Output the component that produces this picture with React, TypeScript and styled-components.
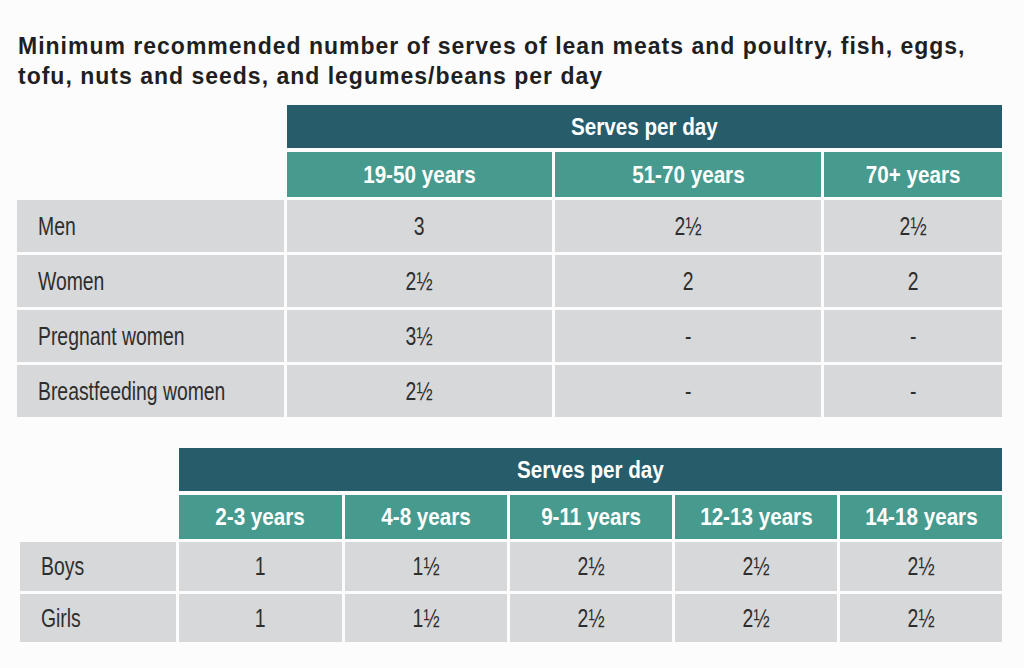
import { Fragment } from 'react';
import { createGlobalStyle, styled } from 'styled-components';

const GlobalStyle = createGlobalStyle`
  html, body {
    margin: 0;
    padding: 0;
    background: #fcfcfc;
  }
`;

const FONT = `'Liberation Sans', Arial, sans-serif`;

const S = {
  Page: styled.div`
    width: 1024px;
    height: 668px;
    box-sizing: border-box;
    padding: 31px 22px 0 17px;
    overflow: hidden;
  `,

  Title: styled.h1`
    margin: 0 0 14px 1px;
    font-family: ${FONT};
    font-size: 23px;
    line-height: 30px;
    font-weight: 700;
    letter-spacing: 1px;
    color: #1f1f1f;
  `,

  Table: styled.div<{ $cols: string; $rows: string }>`
    display: grid;
    grid-template-columns: ${({ $cols }) => $cols};
    grid-template-rows: ${({ $rows }) => $rows};
    gap: 3px;
    font-family: ${FONT};
  `,

  Spacer: styled.div`
    grid-row: span 2;
  `,

  GroupHead: styled.div<{ $span: number }>`
    grid-column: span ${({ $span }) => $span};
    display: flex;
    align-items: center;
    justify-content: center;
    margin-bottom: 1px;
    background: #275c6b;
    color: #fff;
    font-size: 24px;
    font-weight: 700;
  `,

  AgeHead: styled.div`
    display: flex;
    align-items: center;
    justify-content: center;
    background: #479a8e;
    color: #fff;
    font-size: 24px;
    font-weight: 700;
  `,

  Label: styled.div`
    display: flex;
    align-items: center;
    padding-left: 21px;
    background: #d7d8d9;
    color: #2e2e2e;
    font-size: 26px;
  `,

  Value: styled.div`
    display: flex;
    align-items: center;
    justify-content: center;
    background: #d7d8d9;
    color: #2e2e2e;
    font-size: 26px;
  `,

  // the print uses a condensed face; squeeze the installed sans to its width
  Squeeze: styled.span<{ $x: number; $left?: boolean }>`
    display: inline-block;
    white-space: nowrap;
    transform: scaleX(${({ $x }) => $x});
    transform-origin: ${({ $left }) => ($left ? 'left center' : 'center')};
  `,

  Bottom: styled.div`
    margin: 31px 0 0 3px;
  `,
};

const adults = {
  ages: ['19-50 years', '51-70 years', '70+ years'],
  rows: [
    { label: 'Men', values: ['3', '2½', '2½'] },
    { label: 'Women', values: ['2½', '2', '2'] },
    { label: 'Pregnant women', values: ['3½', '-', '-'] },
    { label: 'Breastfeeding women', values: ['2½', '-', '-'] },
  ],
};

const kids = {
  ages: ['2-3 years', '4-8 years', '9-11 years', '12-13 years', '14-18 years'],
  rows: [
    { label: 'Boys', values: ['1', '1½', '2½', '2½', '2½'] },
    { label: 'Girls', values: ['1', '1½', '2½', '2½', '2½'] },
  ],
};

const HEAD_X = 0.86;
const BODY_X = 0.745;

function ServesTable({ data, cols, rows }: { data: typeof adults; cols: string; rows: string }) {
  return (
    <S.Table $cols={cols} $rows={rows}>
      <S.Spacer />
      <S.GroupHead $span={data.ages.length}>
        <S.Squeeze $x={HEAD_X}>Serves per day</S.Squeeze>
      </S.GroupHead>
      {data.ages.map((age) => (
        <S.AgeHead key={age}>
          <S.Squeeze $x={HEAD_X}>{age}</S.Squeeze>
        </S.AgeHead>
      ))}
      {data.rows.map((row) => (
        <Fragment key={row.label}>
          <S.Label>
            <S.Squeeze $x={BODY_X} $left>
              {row.label}
            </S.Squeeze>
          </S.Label>
          {row.values.map((v, i) => (
            <S.Value key={i}>
              <S.Squeeze $x={BODY_X}>{v}</S.Squeeze>
            </S.Value>
          ))}
        </Fragment>
      ))}
    </S.Table>
  );
}

export default function App() {
  return (
    <S.Page>
      <GlobalStyle />
      <S.Title>
        Minimum recommended number of serves of lean meats and poultry, fish, eggs,
        <br />
        tofu, nuts and seeds, and legumes/beans per day
      </S.Title>
      <ServesTable
        data={adults}
        cols="267px 265px 266px 178px"
        rows="44px 45px 52px 52px 52px 52px"
      />
      <S.Bottom>
        <ServesTable
          data={kids}
          cols="156px 163px 162px 162px 162px 162px"
          rows="44px 44px 49px 48px"
        />
      </S.Bottom>
    </S.Page>
  );
}
